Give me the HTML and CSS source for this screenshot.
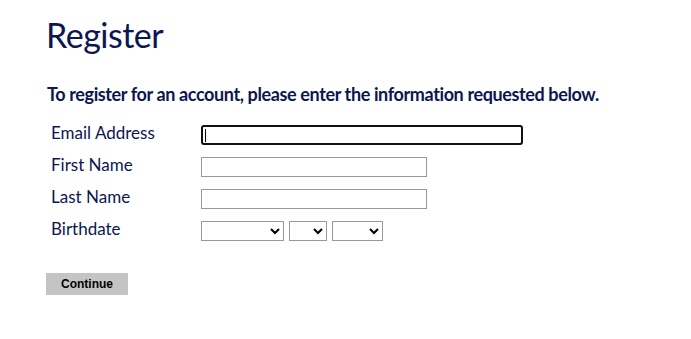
FILE: index.html
```html
<!DOCTYPE html>
<html>
<head>
<meta charset="utf-8">
<link rel="stylesheet" href="styles.css">
</head>
<body>
<div class="page">
  <h1 class="title">Register</h1>
  <p class="intro">To register for an account, please enter the information requested below.</p>
  <form class="form">
    <div class="row">
      <label class="label">Email Address</label>
      <span class="field-wrap"><input class="input input-focus" type="text"><span class="caret"></span></span>
    </div>
    <div class="row">
      <label class="label">First Name</label>
      <input class="input" type="text">
    </div>
    <div class="row">
      <label class="label">Last Name</label>
      <input class="input" type="text">
    </div>
    <div class="row">
      <label class="label">Birthdate</label>
      <div class="selects">
        <select class="sel sel-month"><option></option></select>
        <select class="sel sel-day"><option></option></select>
        <select class="sel sel-year"><option></option></select>
      </div>
    </div>
    <div class="actions">
      <button type="button" class="btn">Continue</button>
    </div>
  </form>
</div>
</body>
</html>
```

FILE: styles.css
```css
html, body {
  margin: 0;
  padding: 0;
  background: #ffffff;
}
.page {
  padding: 15px 0 0 47px;
  font-family: Lato, "Open Sans", sans-serif;
  color: #0c1652;
}
.title {
  margin: 0;
  font-size: 34px;
  font-weight: 400;
  letter-spacing: -0.5px;
  line-height: 40px;
  margin-left: -1px;
}
.intro {
  margin: 28px 0 0 0;
  font-size: 18px;
  font-weight: 700;
  letter-spacing: -0.38px;
  line-height: 22px;
}
.form {
  margin: 20px 0 0 4px;
}
.row {
  display: grid;
  grid-template-columns: 150px auto;
  align-items: center;
  height: 20px;
  margin-bottom: 12px;
}
.label {
  font-size: 17px;
  line-height: 20px;
  position: relative;
  top: -2px;
}
.field-wrap {
  position: relative;
  display: block;
  width: 322px;
  height: 20px;
}
.input {
  box-sizing: border-box;
  width: 226px;
  height: 20px;
  margin: 0;
  border: 1px solid #999999;
  border-radius: 0;
  padding: 0 3px;
  background: #fff;
  outline: none;
}
.input-focus {
  display: block;
  width: 322px;
  border: 2px solid #111111;
  border-radius: 3px;
}
.caret {
  position: absolute;
  left: 4px;
  top: 4px;
  width: 1px;
  height: 13px;
  background: #000;
}
.selects {
  display: flex;
  gap: 5px;
}
.sel {
  box-sizing: border-box;
  height: 20px;
  margin: 0;
  border: 1px solid #999999;
  border-radius: 0;
  background: #fff;
  font-size: 12px;
}
.sel-month { width: 83px; }
.sel-day { width: 38px; }
.sel-year { width: 51px; }
.actions {
  margin: 31px 0 0 -5px;
}
.btn {
  width: 82px;
  height: 22px;
  margin: 0;
  padding: 0;
  border: none;
  background: #c4c4c4;
  color: #000;
  font-family: "Liberation Sans", Arial, sans-serif;
  font-weight: 700;
  font-size: 12px;
}
```
